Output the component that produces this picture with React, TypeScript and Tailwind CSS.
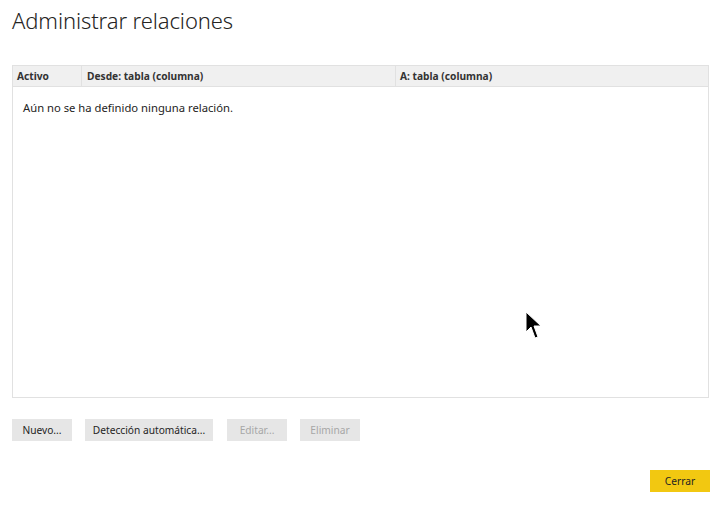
import { ReactNode } from 'react'

function Btn({ children, disabled, className = '' }: { children: ReactNode; disabled?: boolean; className?: string }) {
  return (
    <button
      className={
        'h-[22px] bg-[#e6e6e6] text-[10.2px] leading-none ' +
        (disabled ? 'text-[#a6a6a6] ' : 'text-[#252423] ') +
        className
      }
    >
      {children}
    </button>
  )
}

export default function App() {
  return (
    <div className="relative w-[721px] h-[506px] bg-white font-['Segoe_UI','Noto_Sans',sans-serif] text-[#252423]">
      <h1 className="pl-[12px] pt-[5px] h-[65px] text-[22px] font-light leading-[30px] tracking-[-0.1px] text-[#252423]">
        Administrar relaciones
      </h1>

      <div className="mx-[12px] h-[333px] border border-[#e1e1e1] flex flex-col">
        <div className="flex h-[21px] bg-[#f0f0f0] border-b border-[#e1e1e1] text-[10.2px] font-bold leading-[20px] text-[#333]">
          <div className="w-[69px] pl-[4px] border-r border-[#e1e1e1]">Activo</div>
          <div className="w-[314px] pl-[5px] border-r border-[#e1e1e1]">Desde: tabla (columna)</div>
          <div className="flex-1 pl-[4px]">A: tabla (columna)</div>
        </div>
        <p className="pl-[10px] pt-[13px] text-[11.25px] leading-[16px]">Aún no se ha definido ninguna relación.</p>
      </div>

      <div className="flex gap-[13px] pl-[12px] mt-[21px]">
        <Btn className="w-[60px]">Nuevo...</Btn>
        <Btn className="w-[128px]">Detección automática...</Btn>
        <Btn disabled className="w-[60px] ml-[1px]">Editar...</Btn>
        <Btn disabled className="w-[60px]">Eliminar</Btn>
      </div>

      <div className="flex justify-end pr-[11px] mt-[29px]">
        <Btn className="w-[60px] bg-[#f2c811]">Cerrar</Btn>
      </div>

      {/* mouse pointer */}
      <svg className="absolute left-[525px] top-[311px]" width="17" height="30" viewBox="0 0 17 30">
        <path d="M1 1 L1 21 L6 16 L10 27 L13 26 L9 15 L16 15 Z" fill="#000" stroke="#fff" strokeWidth="1" />
      </svg>
    </div>
  )
}
